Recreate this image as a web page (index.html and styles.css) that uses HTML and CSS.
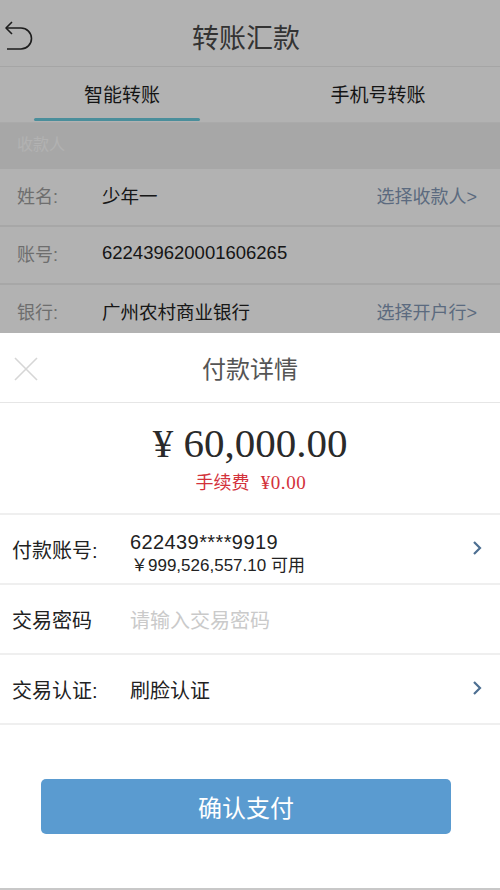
FILE: index.html
```html
<!DOCTYPE html>
<html>
<head>
  <meta name="viewport" content="width=device-width, initial-scale=1">
  <link rel="stylesheet" href="styles.css">
</head>
<body>
  <div class="page">
    <div class="nav">
      <svg class="back" width="34" height="34" viewBox="0 0 34 34">
        <path d="M10 3 L4 9 L10 15" fill="none" stroke="#2a2a2a" stroke-width="1.6" stroke-linejoin="round"/>
        <path d="M4 9 H19 A10.5 10.5 0 0 1 19 30 H5" fill="none" stroke="#2a2a2a" stroke-width="1.6"/>
      </svg>
      <span class="nav-title">转账汇款</span>
    </div>

    <div class="tabs">
      <div class="tab active"><span>智能转账</span></div>
      <div class="tab"><span>手机号转账</span></div>
    </div>

    <div class="section-title">收款人</div>

    <div class="row">
      <span class="label">姓名:</span>
      <span class="value">少年一</span>
      <span class="link">选择收款人&gt;</span>
    </div>
    <div class="row">
      <span class="label">账号:</span>
      <span class="value">622439620001606265</span>
    </div>
    <div class="row">
      <span class="label">银行:</span>
      <span class="value">广州农村商业银行</span>
      <span class="link">选择开户行&gt;</span>
    </div>
  </div>

  <div class="mask"></div>

  <div class="sheet">
    <div class="sheet-head">
      <svg class="close" width="26" height="26" viewBox="0 0 26 26">
        <path d="M2 2 L24 24 M24 2 L2 24" stroke="#d6d6d6" stroke-width="1.6"/>
      </svg>
      <span class="sheet-title">付款详情</span>
    </div>

    <div class="amount-box">
      <div class="amount">¥ 60,000.00</div>
      <div class="fee">手续费 <span class="fee-num">¥0.00</span></div>
    </div>

    <div class="pay-row">
      <span class="pay-label">付款账号:</span>
      <div class="pay-value">
        <div class="card-no">622439****9919</div>
        <div class="balance">￥999,526,557.10 可用</div>
      </div>
      <svg class="chevron" width="12" height="16" viewBox="0 0 12 16">
        <path d="M3 2 L9 8 L3 14" fill="none" stroke="#4d6f92" stroke-width="2.2"/>
      </svg>
    </div>
    <div class="pay-row">
      <span class="pay-label">交易密码</span>
      <span class="placeholder">请输入交易密码</span>
    </div>
    <div class="pay-row">
      <span class="pay-label">交易认证:</span>
      <span class="pay-text">刷脸认证</span>
      <svg class="chevron" width="12" height="16" viewBox="0 0 12 16">
        <path d="M3 2 L9 8 L3 14" fill="none" stroke="#4d6f92" stroke-width="2.2"/>
      </svg>
    </div>

    <div class="btn-wrap">
      <button class="pay-btn">确认支付</button>
    </div>
  </div>
</body>
</html>
```

FILE: styles.css
```css
body {
  margin: 0;
  width: 500px;
  height: 890px;
  overflow: hidden;
  position: relative;
  font-family: "Liberation Sans", "Noto Sans CJK SC", sans-serif;
  background-color: #fff;
}
.page {
  display: flex;
  flex-direction: column;
}
.nav {
  height: 66px;
  display: flex;
  align-items: center;
  justify-content: center;
  position: relative;
  border-bottom: 1px solid #ececec;
  background-color: #fff;
}
.back {
  position: absolute;
  left: 2px;
  top: 19px;
}
.nav-title {
  font-size: 27px;
  color: #4a4a4a;
  margin-top: 6px;
  margin-left: -8px;
}
.tabs {
  height: 55px;
  display: flex;
  background-color: #fff;
}
.tab {
  flex: 1;
  display: flex;
  align-items: center;
  justify-content: center;
  font-size: 19px;
  color: #1e1e1e;
  position: relative;
}
.tab:first-child {
  margin-left: -6px;
}
.tab:last-child {
  margin-right: -6px;
}
.tab span {
  margin-top: -3px;
}
.tab.active::after {
  content: "";
  position: absolute;
  bottom: 1px;
  left: 40px;
  width: 166px;
  height: 3px;
  border-radius: 2px;
  background-color: #6accdf;
}
.section-title {
  height: 46px;
  line-height: 44px;
  padding-left: 17px;
  font-size: 16px;
  color: #ffffff;
  background-color: #f0f0f0;
  border-top: 1px solid #f4f4f4;
}
.row {
  height: 56px;
  display: flex;
  align-items: center;
  padding: 0 23px 0 17px;
  font-size: 18px;
  border-bottom: 2px solid #f0f0f0;
  background-color: #fff;
}
.row span {
  margin-top: -4px;
}
.label {
  width: 85px;
  color: #9e9e9e;
}
.value {
  flex: 1;
  color: #222;
  font-size: 18.5px;
}
.link {
  color: #8499b6;
}
.mask {
  position: absolute;
  left: 0;
  top: 0;
  width: 100%;
  height: 100%;
  background-color: rgba(0, 0, 0, 0.3);
}
.sheet {
  position: absolute;
  left: 0;
  bottom: 0;
  width: 100%;
  height: 555px;
  background-color: #fff;
  border-bottom: 2px solid #c8c8c8;
  display: flex;
  flex-direction: column;
}
.sheet-head {
  height: 69px;
  display: flex;
  align-items: center;
  justify-content: center;
  position: relative;
  border-bottom: 1px solid #e6e6e6;
}
.close {
  position: absolute;
  left: 13px;
  top: 23px;
}
.sheet-title {
  font-size: 24px;
  color: #555;
}
.amount-box {
  height: 110px;
  display: flex;
  flex-direction: column;
  align-items: center;
  border-bottom: 2px solid #efefef;
}
.amount {
  font-family: "Liberation Serif", serif;
  font-size: 41px;
  color: #2a2a2a;
  margin-top: 17px;
  line-height: 46px;
}
.fee {
  font-size: 18px;
  color: #d3323b;
  margin-top: 2px;
  margin-left: 2px;
}
.fee-num {
  font-family: "Liberation Serif", serif;
  font-size: 19px;
  letter-spacing: 0.6px;
  margin-left: 6px;
}
.pay-row {
  height: 68px;
  display: flex;
  align-items: center;
  padding: 0 17px 0 12px;
  border-bottom: 2px solid #efefef;
  font-size: 20px;
  color: #222;
}
.pay-label {
  width: 118px;
}
.pay-value {
  flex: 1;
  display: flex;
  flex-direction: column;
}
.card-no {
  font-size: 20px;
  letter-spacing: 0.4px;
  line-height: 24px;
  margin-top: 10px;
}
.balance {
  font-size: 17px;
  line-height: 24px;
  margin-left: 1px;
}
.placeholder {
  color: #cacaca;
}
.pay-text {
  flex: 1;
}
.chevron {
  margin-top: -2px;
}
.btn-wrap {
  display: flex;
  justify-content: center;
  padding-top: 54px;
}
.pay-btn {
  width: 410px;
  height: 55px;
  border: none;
  border-radius: 5px;
  background-color: #5a9bd0;
  color: #fff;
  font-family: "Noto Sans CJK SC", sans-serif;
  font-size: 24px;
  margin-left: -8px;
}
```
